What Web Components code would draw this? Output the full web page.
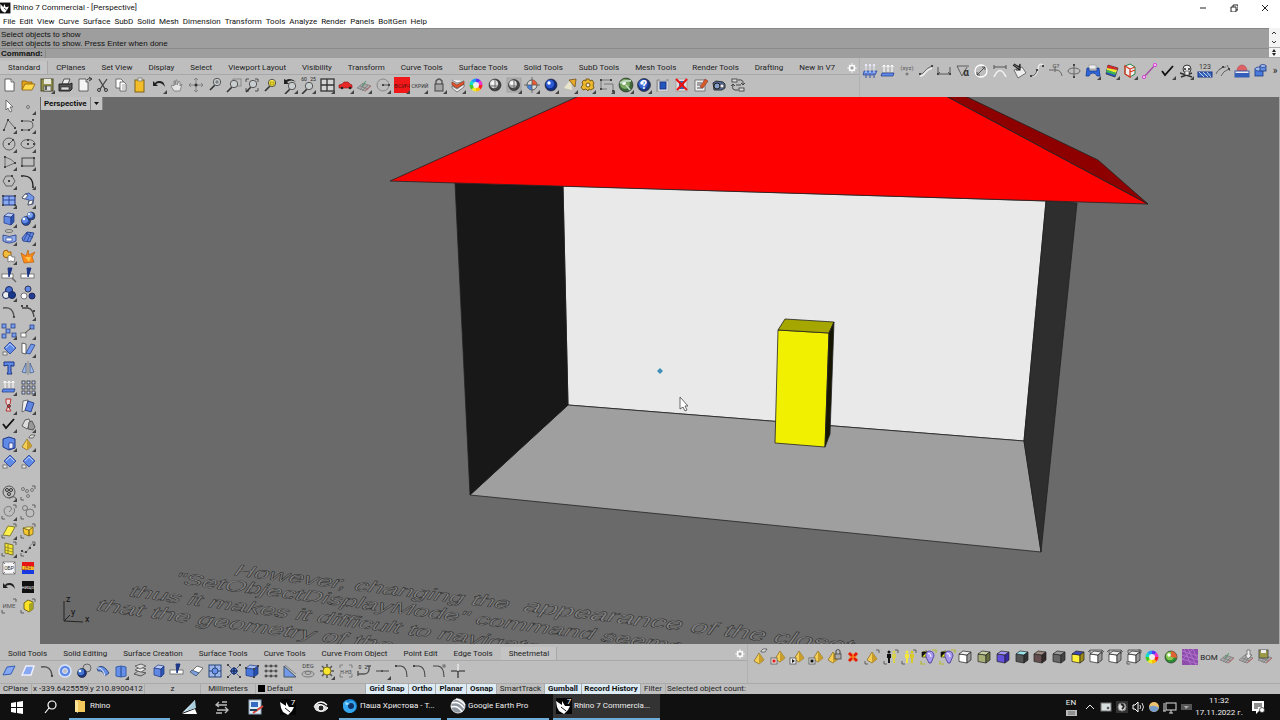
<!DOCTYPE html>
<html lang="en">
<head>
<meta charset="utf-8">
<title>Rhino 7 Commercial - [Perspective]</title>
<style>
    html, body { margin: 0; height: 100%; }
    body {
        display: flex;
        flex-direction: column;
        overflow: hidden;
        background: #bebebe;
        color: #222;
        font: 8px/10px Roboto, "Noto Sans", sans-serif;
    }
    .workspace { display: flex; flex: 1; min-height: 0; }
    .row { display: flex; }
    .sidebar { width: 40px; flex: none; background: #bebebe; }
</style>
</head>
<body>
    <title-bar>Rhino 7 Commercial - [Perspective]</title-bar>
    <menu-bar items="File,Edit,View,Curve,Surface,SubD,Solid,Mesh,Dimension,Transform,Tools,Analyze,Render,Panels,BoltGen,Help"></menu-bar>
    <command-area>
        <div>Select objects to show</div>
        <div>Select objects to show. Press Enter when done</div>
    </command-area>

    <div class="row">
        <tool-panel class="top" tabs="Standard,CPlanes,Set View,Display,Select,Viewport Layout,Visibility,Transform,Curve Tools,Surface Tools,Solid Tools,SubD Tools,Mesh Tools,Render Tools,Drafting,New in V7" active="Standard">
            <tool-strip columns="46" icons="new open save* print properties cut copy paste undo* hand rotate-view zoom zoom-window zoom-extents zoom-selected undo-view* zoom-lens* four-view* car* mesh-plane* circle-axis* all-red* hide-text* lock* layers* wheel sphere sphere-framed* target* sphere-blue* spotlight* gear* dimension* globe* help* panel-blue cancel edit camera swap"></tool-strip>
        </tool-panel>
        <tool-strip class="side-top" columns="22" more icons="arrows-plane arrows-base xyz offset-curve span angle diameter arc-dim box-arrow blend radius-tick spin clamp* rainbow* open-box* line-magenta check* skull* hatch-123 fillet-curve dome cylinders"></tool-strip>
    </div>

    <div class="workspace">
        <div class="sidebar">
            <tool-strip columns="2" rows="20" icons="pointer point* polyline* curve* circle* ellipse* arc* rect* polygon* fillet* surface* loft* cube* spheres* tube* patch* puzzle* explode trim split join* balls arc-plain arc-points* array* move* diamond-copy shear* text-solid mirror arrows-base* grid-nine* bolt* flip* check* solid-gray* cube-cut* pyramid-tag* diamond-copy diamond-copy"></tool-strip>
            <tool-strip class="lower" columns="2" rows="7" icons="film* nodes spiral* circles yellow-plane* yellow-box yellow-grid* nodes-curve text-obr text-color undo text-none text-name yellow-cube"></tool-strip>
        </div>
        <model-viewport label="Perspective"></model-viewport>
    </div>

    <div class="row">
        <tool-panel class="bottom" tabs="Solid Tools,Solid Editing,Surface Creation,Surface Tools,Curve Tools,Curve From Object,Point Edit,Edge Tools,Sheetmetal" active="Sheetmetal">
            <tool-strip columns="40" icons="patch-blue patch-white arc-plain ring cylinder-ball bend fold* stack cube split slab frame-blue explode-blue cube-dots dots slope deg flower* bracket-text unroll line-dot* arc-top arc-top arc-square cross-line"></tool-strip>
        </tool-panel>
        <tool-strip class="side-bottom" columns="28" icons="pyramid-tag pyramid-red pyramid-arrow pyramid-black pyramid-lock red-x pyramid-frame people-dark people-yellow bulb bulb cube-white cube-olive cube-violet cube-cyan cube-brown cube-gray cube-yellow cube-wire cube-wire cube-wire-corners wheel globe-color mesh-purple bom mesh-plane mesh-down mesh-save"></tool-strip>
    </div>

    <status-bar></status-bar>
    <task-bar></task-bar>

<script>
// region Icon drawing helpers
const p = (d, fill = 'none', stroke = '#333', w = 1) =>
    `<path d="${d}" fill="${fill}" stroke="${stroke}" stroke-width="${w}"/>`
const c = (x, y, r, fill = 'none', stroke = '#333', w = 1) =>
    `<circle cx="${x}" cy="${y}" r="${r}" fill="${fill}" stroke="${stroke}" stroke-width="${w}"/>`
const e = (x, y, rx, ry, fill = 'none', stroke = '#333', w = 1) =>
    `<ellipse cx="${x}" cy="${y}" rx="${rx}" ry="${ry}" fill="${fill}" stroke="${stroke}" stroke-width="${w}"/>`
const r = (x, y, w, h, fill = 'none', stroke = '#333', sw = 1) =>
    `<rect x="${x}" y="${y}" width="${w}" height="${h}" fill="${fill}" stroke="${stroke}" stroke-width="${sw}"/>`
const t = (x, y, size, str, fill = '#222', weight = 400) =>
    `<text x="${x}" y="${y}" font-size="${size}" fill="${fill}" font-weight="${weight}" text-anchor="middle">${str}</text>`

const BLUE = '#5f8ae8'
const NAVY = '#1c3585'
const PALE = '#b9cdf8'

const cube = (front, top, side, line = '#222') =>
    p('M3 6 11 7V15L3 13.500Z', front, line, .7) + p('M3 6 7 3 15 4 11 7Z', top, line, .7) + p('M11 7 15 4V12L11 15Z', side, line, .7)
const pyramid = (x, y) =>
    p(`M${x} ${y}l5 7-5 4-5-3z`, '#f4ce55', '#6b5310', .6) + p(`M${x} ${y}l5 7-5 4z`, '#c99d2c', 'none')
const lens = (x, y, fill = '#c9ced1') =>
    p(`M${x - 2} ${y + 3}l-5 5`, 'none', '#333', 1.600) + c(x, y, 3.700, fill, '#555')
const nodes = (...pts) => pts.map(([x, y]) => r(x - 1, y - 1, 2, 2, '#444', 'none')).join('')
const corners = p('M2 13V16H5M13 2H16V5', 'none', '#555', .9)
const arrow = p('M3 5V10H8L6 8Q11 5 15 11 14 4 9 5 6 5 5 7Z', '#222', 'none')
const diamond = (x, y) => p(`M${x} ${y - 6}l6 6-6 6-6-6z`, BLUE, NAVY, .7) + p(`M${x - 4} ${y}l4-4 4 4`, 'none', PALE)
const mesh = p('M2 12 8 7 16 10 10 15ZM5 10 13 13M10 8 5 14M13 9 7 15', '#aaa', '#777', .7) + p('M10 15 16 10', 'none', '#b66')

function wheel(x, y, rad) {
    const colors = ['#f22', '#fb0', '#ee2', '#4c2', '#1dc', '#29f', '#53f', '#e3c']
    return colors.map((color, i) => {
        const a = i * Math.PI / 4
        const b = a + Math.PI / 4
        const px = v => (x + rad * Math.cos(v)).toFixed(1)
        const py = v => (y + rad * Math.sin(v)).toFixed(1)
        return p(`M${x} ${y}L${px(a)} ${py(a)}A${rad} ${rad} 0 0 1 ${px(b)} ${py(b)}Z`, color, 'none')
    }).join('')
}
const ball = (x, y, rad, color, dark) =>
    c(x, y, rad, dark, '#222', .6) + c(x - 1, y - 1, rad * .7, color, 'none') + c(x - 2, y - 2, rad * .28, '#fff', 'none')
const xmark = p('M3 3 14 14M14 3 4 14', 'none', '#e11', 2)
const upArrows = x => p(`M${x} 10V3M${x - 1.500} 5l1.500-2 1.500 2`, 'none', '#fff', 1)
const bulb = p('M3 4V9H8V3Z', '#ee2', '#111', .6) + p('M3 4H8L3 9Z', '#111', 'none') + p('M10 3Q15 3 15 8L12 15H10L7 9Q6 4 10 3Z', '#a69af0', '#44338c', .8) + p('M9 6Q11 4 12 9', 'none', '#fff') + p('M2 13V16H6M13 2H17V5', 'none', '#b3b830', 1.200)
const person = (x, fill) => c(x, 4, 1.500, fill, 'none') + p(`M${x - 2} 6H${x + 2}V10H${x + 1}V15H${x - 1}V10H${x - 2}Z`, fill, 'none')
// endregion

const ICONS = {
    'new': p('M5 3H11L14 6V15H5Z', '#fff', '#444', .8) + p('M11 3V6H14', '#ddd', '#444', .7),
    'open': p('M3 14V5H7L8 6H13V9', '#e5a51a', '#8a5e0b', .8) + p('M3 14 6 8H16L13 14Z', '#ffd84c', '#8a5e0b', .8),
    'save': r(3, 3, 12, 12, '#92904d', '#4c4c28') + r(6, 3, 7, 5, '#e8e8df', 'none') + r(6, 10, 7, 5, '#ddd', '#444', .6) + p('M8 10V14', 'none', '#333', 1.500),
    'print': p('M6 8 8 3H14L12 8Z', '#eee', '#333', .8) + p('M3 8H14L16 7V13L14 15H3Z', '#555', '#222') + r(5, 11, 8, 3, '#ddd', '#222', .6),
    'properties': p('M4 3H11V6H13V15H4Z', '#f5f5f5', '#444', .8) + p('M12 4Q13 2 16 3M14 1 17 3 14 5', 'none', '#333', 1),
    'cut': p('M5 3 11 13M13 3 6 13', 'none', '#444', 1.300) + c(5, 14, 1.500) + c(12, 14, 1.500),
    'copy': p('M4 3H9L11 5V12H4Z', '#fff', '#555', .8) + p('M8 6H12L14 8V15H8Z', '#fff', '#555', .8) + p('M10 9H13M10 11H13M10 13H13', 'none', '#777', .7),
    'paste': r(4, 4, 9, 12, '#f2bd27', '#80631b') + r(7, 2, 4, 3, '#e5e5e5', '#777', .7),
    'undo': arrow,
    'hand': p('M6 15 3 10 4 9 6 10V5H7V9L8 4H9V9L11 5 12 6V10L14 8 12 15Z', '#e5e5e5', '#777', .8),
    'rotate-view': p('M9 2V16M2 9H16M7 4 9 2 11 4M7 14 9 16 11 14M4 7 2 9 4 11M14 7 16 9 14 11', 'none', '#777', .8) + c(9, 9, 1.500, '#333', 'none'),
    'zoom': lens(11, 6) + p('M9 6H13M11 4V8', 'none', '#555', .8),
    'zoom-window': r(8, 3, 8, 7, 'none', '#777', .7) + lens(9, 8),
    'zoom-extents': lens(10, 8) + p('M3 6V3H6M12 3H15V6M15 12V15H12M3 12V15H6', 'none', '#333', .8),
    'zoom-selected': lens(10, 7, '#fff04a') + p('M8 6H12V9H8Z', '#e9d52e', '#77670b', .5),
    'undo-view': lens(11, 10) + p('M3 3V8H8L6 6Q10 3 15 6 10 1 5 4Z', '#222', 'none'),
    'zoom-lens': t(5, 5, 5, '60') + t(14, 5, 5, '25') + lens(10, 10),
    'four-view': r(3, 3, 13, 12, '#d4d4d4', '#333', 1.300) + p('M9 3V15M3 9H16', 'none', '#333', 1.300),
    'car': p('M2 9 5 8 7 6H11L13 8 15 9V12H2Z', '#e62828', '#8f1111', .6) + c(5, 12, 1.300, '#222', 'none') + c(13, 12, 1.300, '#222', 'none'),
    'mesh-plane': mesh + p('M7 10 11 5', 'none', '#496'),
    'circle-axis': c(9, 9, 6, 'none', '#888') + p('M9 9H15', 'none', '#555') + nodes([9, 9], [15, 9]),
    'all-red': r(1, 1, 16, 16, '#f01818', 'none') + t(9, 12, 6, 'ВСИЧ', '#5d1111'),
    'hide-text': t(9, 12, 5, 'СКРИЙ', '#333'),
    'lock': p('M6 9V5Q9 1 12 5V9', 'none', '#555', 1.400) + r(5, 8, 8, 7, '#a5a5a5', '#444'),
    'layers': p('M3 10 8 13 15 8V11L8 16 3 12Z', '#eee', '#444', .6) + p('M3 6 8 9 15 5V8L8 12 3 9Z', '#e4542d', '#7c2c16', .6) + p('M3 4 8 7 15 5', '#fff', '#666', .7),
    'wheel': wheel(9, 9, 6.500) + c(9, 9, 3, '#eee', 'none'),
    'sphere': ball(9, 9, 6, '#ddd', '#444') + p('M9 3V15M4 10H14', 'none', '#555', .8),
    'sphere-framed': r(2, 2, 14, 14, '#afafaf', '#999', .7) + ball(9, 9, 5.500, '#ddd', '#444') + p('M9 4V14M4 10H14', 'none', '#555', .8),
    'target': c(9, 9, 5, '#ddd', '#555') + p('M9 9V4A5 5 0 0 1 14 9Z', '#e75b35', 'none') + p('M9 9V14A5 5 0 0 1 4 9Z', '#457fd8', 'none') + p('M9 1V17M1 9H17', 'none', '#555', .8),
    'sphere-blue': ball(9, 9, 6, '#2d5bd6', '#102d80'),
    'spotlight': p('M10 3 3 12 11 14Z', '#e9e5cd', 'none') + p('M8 4 15 3 14 11Z', '#e7ac29', '#75501a', .8),
    'gear': p('M7 3H10L11 5 13 4 15 7 14 9 15 12 12 14 10 13 9 15 7 13 4 14 2 11 4 9 3 6 5 4 7 5Z', '#edb82b', '#725212', .9) + c(9, 9, 2, '#eed', '#725212'),
    'dimension': p('M3 4H13M3 4V13M6 8H15V15M3 13H9', 'none', '#666', .8) + nodes([3, 4], [13, 4], [3, 13], [15, 15]),
    'globe': ball(9, 9, 7, '#7ca862', '#3d6636') + p('M3 7Q8 4 14 5M9 9 13 14', 'none', '#bed9bd', 1.800),
    'help': ball(9, 9, 6.500, '#3863d2', '#193682') + t(9, 13, 12, '?', '#fff', 700),
    'panel-blue': r(4, 5, 10, 10, '#eee', '#aaa', .7) + r(6, 6, 6, 7, '#2455bd', NAVY) + p('M3 4V16M3 4H6M12 4H15', 'none', '#888'),
    'cancel': r(3, 3, 11, 12, '#ddd', '#999', .7) + r(6, 5, 5, 8, '#3d63aa', 'none') + xmark,
    'edit': p('M3 4H13V15H3Z', '#eee', '#555', .7) + p('M5 7H10M5 9H9M5 12H11', 'none', '#555') + p('M8 11 13 3 16 5 11 12Z', '#d75c23', '#833', .6),
    'camera': p('M3 7 6 5 13 6 15 8V12L12 14H4Z', '#536ca3', '#333') + c(7, 10, 3, '#879fc7', '#222') + c(12, 10, 2, '#eee', '#333', .7),
    'swap': r(3, 3, 5, 3, '#ddd', '#333', .8) + r(10, 12, 5, 3, '#ddd', '#333', .8) + p('M9 4Q15 3 14 8M9 14Q2 15 4 9M12 7 14 9 16 7M2 10 4 8 6 10M7 9H12', 'none', '#444', 1),

    'arrows-plane': p('M3 9H16L14 13H2Z', BLUE, NAVY, .6) + [5, 9, 13].map(x => p(`M${x} 2V16M${x - 1} 4l1-2 1 2`, 'none', '#eef', .9)).join('') + p('M5 11V16M9 11V16M13 11V16', 'none', NAVY),
    'arrows-base': p('M3 11H15L14 14H2Z', BLUE, NAVY, .7) + upArrows(5) + upArrows(9) + upArrows(13),
    'xyz': t(9, 8, 6, '(xyz)', '#555') + c(9, 12, 1, 'none', '#666'),
    'offset-curve': p('M3 14Q6 14 8 11T15 6', 'none', '#eee', 1.500) + p('M3 12Q6 12 8 9T15 4', 'none', '#555', .8) + nodes([3, 12], [15, 4]),
    'span': p('M3 5V12H15V5M3 12 5 10M15 12 13 10', 'none', '#555', 1) + nodes([3, 12], [15, 12]),
    'angle': p('M3 4H15M3 4 8 14 13 5', 'none', '#555', .9) + t(12, 14, 10, 'α', '#333', 700),
    'diameter': c(9, 9, 6, 'none', '#fff', 1.300) + p('M5 13 13 5M10 5H13V8M5 10V13H8', 'none', '#444', .9),
    'arc-dim': p('M3 5H15M3 3V7M15 3V7', 'none', '#555') + p('M3 15Q9 2 15 15', 'none', '#eee', 1.600),
    'box-arrow': p('M4 8 12 5 16 11 8 16Z', '#eee', '#555', .8) + p('M3 3 10 8M4 2 9 5 10 2V8H6', 'none', '#222', 1.200),
    'blend': p('M3 14Q9 15 10 7T16 4', 'none', '#eee', 1.300) + p('M3 14Q8 14 9 8', 'none', '#555') + nodes([3, 14], [9, 8], [15, 4]),
    'radius-tick': t(9, 6, 6, 'G?', '#444') + p('M2 8H9Q14 8 15 14M8 6V10', 'none', '#666'),
    'spin': e(9, 9, 6, 3, 'none', '#666') + p('M9 3V15', 'none', '#666') + nodes([9, 3], [9, 15]),
    'clamp': p('M5 3H12V7H5Z', '#eee', '#999', .7) + p('M3 6H5V9H13V6H15L16 14H13Q12 11 9 11T5 14H2Z', '#2e65dc', '#193c91', .8),
    'rainbow': p('M5 3 15 6 12 15 3 12Z', '#284fc9', '#333', .7) + p('M5 3 15 6 14 8 4 6Z', '#d72a24', 'none') + p('M4 6 14 8 13 11 4 8Z', '#efe82d', 'none') + p('M4 8 13 11 12 13 3 10Z', '#38b84e', 'none'),
    'open-box': p('M4 4 9 2 14 5V12L9 15 4 12Z', '#eee', '#278347') + p('M4 4 9 7V15L4 12ZM9 7 14 5M9 10 14 8', 'none', '#dd3722', 1.300),
    'line-magenta': p('M4 15 15 3', 'none', '#a64aa6', 1.300) + c(4, 15, 1.700, '#f6b6f6', '#d34bd3') + c(15, 3, 1.700, '#f6b6f6', '#d34bd3'),
    'check': p('M3 9 6 13 14 4', 'none', '#111', 1.800),
    'skull': p('M3 11 15 15M15 11 4 15', 'none', '#333', 1.500) + c(10, 7, 4, '#eee', '#333', 1) + r(8, 9, 4, 4, '#eee', '#333', .6) + c(8, 7, 1, '#222', 'none') + c(12, 7, 1, '#222', 'none'),
    'hatch-123': t(9, 7, 7, '123', '#333') + r(2, 10, 14, 5, '#3765bc', NAVY) + p('M3 10 8 15M7 10 12 15M11 10 15 15', 'none', '#e4edff', .8),
    'fillet-curve': p('M2 12Q5 5 12 5M7 14Q9 9 15 7M5 8 9 5M13 3 16 9', 'none', '#666', 1) + nodes([9, 5], [15, 7]),
    'dome': p('M4 9A5 6 0 0 1 14 9Z', '#df6065', '#a44', .6) + r(2, 9, 14, 6, '#eee', '#3b5ca7') + r(2, 11, 14, 4, '#315fbb', 'none'),
    'cylinders': r(3, 7, 8, 7, '#477ad9', NAVY, .8) + e(7, 7, 4, 2, '#9ebbee', NAVY, .7) + r(8, 4, 6, 5, '#638ede', NAVY, .8) + e(11, 4, 3, 1.500, '#9ebbee', NAVY, .7),

    'pointer': p('M6 3V13L8 11 10 15 12 14 10 10H13Z', '#fff', '#555', .8),
    'point': c(9, 10, 1.500, 'none', '#666', .8),
    'polyline': p('M4 14 8 4 15 12', 'none', '#555', .9) + nodes([4, 14], [8, 4], [15, 12]),
    'curve': p('M3 5H10Q14 5 14 9T9 14H3', 'none', '#555', .9) + nodes([3, 5], [14, 4], [3, 14], [10, 14]),
    'circle': c(9, 9, 6, 'none', '#555', .9) + p('M9 9 13 5', 'none', '#555') + nodes([9, 9], [13, 5]),
    'ellipse': e(9, 9, 7, 4.500, 'none', '#555', .9) + nodes([9, 9], [9, 5], [15, 9]),
    'arc': p('M5 4Q12 6 15 10L5 14V4', 'none', '#555', .8) + nodes([5, 4], [15, 10], [5, 14]),
    'rect': r(3, 5, 12, 8, 'none', '#444', 1) + nodes([3, 13], [15, 5]),
    'polygon': p('M6 4H12L15 9 12 14H6L3 9Z', 'none', '#555', .9) + nodes([9, 9], [12, 4]),
    'fillet': p('M3 4Q14 3 14 15', 'none', '#222', 1.300) + nodes([3, 4], [14, 15]),
    'surface': r(3, 5, 12, 9, '#89a9f1', NAVY, 1) + p('M9 5V14M3 9H15', 'none', NAVY, .8) + nodes([3, 5], [15, 5], [3, 14], [15, 14]),
    'loft': p('M3 7 6 3 10 2 15 6 14 13 9 14 10 9Z', '#7298e7', NAVY, .7) + p('M3 7 6 3 9 4 6 8Z', '#fff', '#444', .7) + p('M10 10 14 9 13 13 9 14Z', '#fff', '#444', .7),
    'cube': p('M4 6 11 7V15L4 13Z', '#6189e4', NAVY, .7) + p('M4 6 8 3 14 4 11 7Z', '#bccdf7', NAVY, .7) + p('M11 7 14 4V12L11 15Z', '#3157b6', NAVY, .7),
    'spheres': ball(7, 11, 4.500, BLUE, '#284ca8') + ball(12, 6, 4, '#7da4f1', '#284ca8'),
    'tube': e(9, 3, 4, 1.500, 'none', '#777') + p('M3 7Q9 10 16 7V13Q9 17 3 13Z', '#8facef', NAVY, .8) + r(6, 10, 6, 3, '#fff', NAVY, .6),
    'patch': p('M3 10 8 4 15 5 11 14 4 13Z', '#6389e3', NAVY, .8) + p('M7 5 14 10M9 4 5 12M12 4 8 14', 'none', NAVY, .7),
    'puzzle': p('M4 4 7 3 8 5 11 5 11 9 8 11 4 10 3 7Z', '#f2bd3b', '#a15c10') + p('M8 9 11 8 12 10 15 10 14 15 11 14 8 15Z', '#fff', '#666', .7),
    'explode': p('M2 6 7 9 9 3 10 8 16 5 13 10 15 15 5 16Z', '#ff8a19', '#b8630b', .7) + p('M6 10 12 10 10 15Z', '#ffc546', 'none'),
    'trim': r(2, 8, 11, 4, '#fff', '#555', .7) + p('M8 2H12L9 11Z', NAVY, NAVY) + p('M12 12 16 16', 'none', '#666', 1.500),
    'split': r(2, 8, 13, 4, '#fff', '#555', .7) + p('M8 2H12L9 11Z', NAVY, NAVY),
    'join': c(9, 6, 3.500, '#486fd0', '#16275f') + c(6, 11, 3.500, '#eee', '#16275f') + c(12, 11, 3.500, '#173788', '#16275f'),
    'balls': c(9, 5, 3, BLUE, '#335') + c(5, 12, 3, '#fff', '#445', .7) + c(13, 12, 3, '#1e3e94', '#225'),
    'arc-plain': p('M3 5Q13 3 14 14', 'none', '#555', 1.500) + c(14, 14, .7),
    'arc-points': p('M3 5H9Q14 6 15 14', 'none', '#444', 1.300) + nodes([3, 3], [8, 3], [15, 8]),
    'array': [[4, 4], [13, 4], [8, 9], [4, 14], [14, 13]].map(([x, y]) => r(x - 2, y - 2, 4, 4, '#7b9ee8', NAVY, .7)).join(''),
    'move': r(2, 11, 5, 4, '#fff', '#555', .7) + r(11, 3, 4, 4, '#7096e7', NAVY, .7) + p('M6 11 12 6', 'none', '#444'),
    'diamond-copy': diamond(10, 8) + r(3, 12, 4, 3, '#eee', '#555', .7),
    'shear': p('M3 3 7 4V14L3 13Z', '#fff', '#444', .8) + p('M7 13 12 4 16 5 11 14Z', '#759bed', NAVY, .7),
    'text-solid': p('M4 3H14V7H12L11 6V13L12 15H7L8 13V6L4 7Z', BLUE, NAVY),
    'mirror': p('M3 13 7 4V14ZM15 13 11 4V14Z', '#a3bced', '#486087', .8) + p('M9 2V16', 'none', '#777', .7),
    'grid-nine': [3, 8, 13].map(x => [3, 8, 13].map(y => r(x, y, 3, 3, '#c9d7ff', '#333', .8)).join('')).join(''),
    'bolt': p('M6 2H11L10 7 8 9 11 14H6L8 9 6 6Z', '#e9dada', '#b33') + c(9, 9, 1.500, '#c33', '#333', .7),
    'flip': p('M4 4 9 3 7 13 3 15Z', '#eee', '#444', .7) + p('M9 4 15 6 12 15 6 13Z', '#6086df', NAVY, .8),
    'solid-gray': p('M3 11 6 5 10 4 12 8 8 14Z', '#ddd', '#444', .8) + p('M10 7 13 6 16 12 14 15 9 14Z', '#999', '#444', .8),
    'cube-cut': p('M3 5 9 3 15 5V14L9 16 3 13Z', BLUE, NAVY) + p('M9 9H13V14L9 15Z', '#eef', NAVY, .7),
    'pyramid-tag': pyramid(8, 5) + p('M10 3 12 1H16L14 4H10Z', '#ddd', '#444', .7),
    'film': c(9, 8, 6, 'none', '#555') + c(7, 6, 1.500) + c(11, 6, 1.500) + c(9, 10, 1.500) + p('M9 14Q15 11 16 15', 'none', '#555'),
    'nodes': [[4, 5], [8, 7], [13, 6], [9, 12]].map(([x, y]) => c(x, y, 1.500, 'none', '#666', .8)).join('') + corners,
    'spiral': p('M9 9Q13 7 11 4Q6 2 4 7Q4 14 11 13Q16 9 14 5', 'none', '#777', .9) + corners,
    'circles': c(6, 5, 2.500, 'none', '#666', .8) + c(11, 10, 4, 'none', '#666', .8) + corners,
    'yellow-plane': p('M3 13 8 4 15 5 10 14Z', '#fff04a', '#6a6825', .8) + corners,
    'yellow-box': p('M4 6 10 8V14L5 12ZM10 8 14 5V12L10 14Z', '#f6c62c', '#71601a', .8) + p('M4 6 8 5 14 5 10 8Z', '#fff17d', '#71601a', .7) + corners,
    'yellow-grid': p('M5 3 13 5V15L5 13Z', '#f9e632', '#77762d') + p('M8 4V14M5 7 13 9M5 10 13 12', 'none', '#77762d', .7) + corners,
    'nodes-curve': p('M3 11Q7 15 10 8T16 5', 'none', '#777', .8) + nodes([3, 11], [7, 12], [11, 8], [15, 5]) + corners,
    'text-obr': r(3, 3, 12, 12, '#f7f7f7', '#444', .5) + t(9, 11, 5, 'ОБР') + p('M3 3 5 5M15 3 13 5M3 15 5 13M15 15 13 13', 'none', '#444', .7),
    'text-color': r(3, 3, 12, 4, '#e71515', 'none') + r(3, 7, 12, 4, '#ffe02d', 'none') + r(3, 11, 12, 4, '#173ae0', 'none') + t(9, 11, 5, 'ЦВЯТ', '#a12'),
    'text-none': r(3, 3, 12, 12, '#111', 'none') + t(9, 11, 4, 'НИЩО', '#fff'),
    'text-name': t(9, 11, 6, 'ИМЕ', '#555') + corners,
    'yellow-cube': p('M5 6 9 3 14 5V12L10 15 5 12Z', '#ffe126', '#6d631b') + p('M10 7V15L14 12V5Z', '#a5a51d', 'none') + corners,

    'patch-blue': p('M3 13 7 5 15 4 11 12Z', '#86a7f1', '#335eb7'),
    'patch-white': p('M3 13 7 4 15 4 12 13Z', '#86a7f1', '#eef', 1.500),
    'ring': c(9, 9, 6, BLUE, '#dbe5ff', 1.500) + c(9, 9, 2.500, '#bebebe', '#dbe5ff'),
    'cylinder-ball': c(12, 6, 4, 'none', '#666') + ball(7, 11, 4.500, '#4577d2', NAVY),
    'bend': p('M3 6Q9 1 15 11L11 14Q9 8 4 9Z', '#658ee6', '#34507f') + p('M3 6Q9 5 11 14', 'none', '#dfe8ff'),
    'fold': p('M4 5 9 4V15L4 14ZM9 4 14 5V14L9 15Z', '#668fea', '#375fa9'),
    'stack': p('M3 12 7 9 15 11 10 14Z', '#bbb', '#555') + p('M4 8 9 5 15 7 10 10Z', '#eee', '#666') + p('M4 4 10 2 15 4 9 7Z', '#ddd', '#666'),
    'slab': p('M5 9 10 4 16 6 12 11Z', '#fff', '#555', .8) + p('M3 10 5 8 12 11 9 14Z', '#7da0e2', '#456', .8),
    'frame-blue': r(3, 3, 12, 12, '#9eb6e8', '#27457b') + p('M9 3V15M3 9H15', 'none', '#27457b') + c(9, 9, 3, '#6c93ed', '#27457b'),
    'explode-blue': c(9, 9, 3, '#4a74d0', NAVY) + p('M9 5V13M5 9H13', 'none', '#124', 1) + p('M3 3 6 6M15 3 12 6M3 15 6 12M15 15 12 12', 'none', '#456', .8) + nodes([3, 3], [15, 3], [3, 15], [15, 15]),
    'cube-dots': cube('#4676d8', '#a5bdf1', '#2550aa', NAVY) + nodes([3, 6], [11, 7], [15, 4], [11, 15]),
    'dots': [4, 9, 14].map(y => p(`M4 ${y}H14`, 'none', '#555', .7) + c(4, y, 1) + c(9, y, 1) + c(14, y, 1)).join(''),
    'slope': p('M3 15V4L15 15Z', '#739aea', '#456') + p('M4 3 15 12', 'none', '#888'),
    'deg': t(9, 6, 6, 'DEG', '#444') + e(9, 12, 6, 3, 'none', '#777') + e(9, 11, 3, 1.500, 'none', '#777'),
    'flower': p('M9 2V16M2 9H16M4 4 14 14M14 4 4 14', 'none', '#555', 1.500) + c(9, 9, 4, '#f8e52e', '#827420'),
    'bracket-text': t(9, 12, 5, 'H-H3', '#444') + p('M3 6V3H6M12 3H15V6M3 12V15H6M12 15H15V12', 'none', '#666', .7),
    'unroll': p('M3 12H9Q15 12 14 4M3 9V14M12 4H16', 'none', '#555', 1.400) + t(5, 7, 5, '0') + t(11, 7, 5, '2'),
    'line-dot': p('M2 9H15', 'none', '#444') + c(8, 9, 1, '#444', 'none'),
    'arc-top': p('M3 4H8Q14 5 14 15', 'none', '#444', 1.100) + nodes([3, 4]),
    'arc-square': p('M3 4H8Q14 5 14 15', 'none', '#444', 1.100) + r(13, 3, 2, 2, 'none', '#555', .8),
    'cross-line': p('M2 9H16M9 9V16', 'none', '#222', 1.100) + p('M9 2V9', 'none', '#eee', 1.300),
    'pyramid-red': pyramid(11, 3) + r(2, 10, 6, 6, '#eee', '#555', .8) + r(4, 12, 2, 2, '#e21f1f', '#e21f1f'),
    'pyramid-arrow': pyramid(11, 3) + r(2, 10, 6, 6, '#eee', '#555', .8) + p('M4 11 7 13 4 15Z', '#222', 'none'),
    'pyramid-black': pyramid(11, 3) + r(2, 10, 6, 6, '#eee', '#555', .8) + r(4, 12, 2, 2, '#111', '#111'),
    'pyramid-lock': pyramid(7, 4) + p('M10 6V3Q12 0 14 3V6', 'none', '#555', 1.200) + r(9, 6, 6, 5, '#aaa', '#444', .8),
    'red-x': p('M5 5 13 13M13 5 5 13', 'none', '#e51b08', 3) + p('M5 9H13M9 5V13', 'none', '#ff9b25', 1),
    'pyramid-frame': pyramid(9, 4) + corners,
    'people-dark': person(7, '#111') + person(12, '#d8d34f') + corners,
    'people-yellow': person(7, '#f4e83c') + person(12, '#d8c828') + corners,
    'bulb': bulb,
    'cube-white': cube('#fff', '#eee', '#999'),
    'cube-olive': cube('#a8b078', '#c9cda4', '#68713d'),
    'cube-violet': cube('#6351dc', '#a297f6', '#3929a7'),
    'cube-cyan': cube('#555', '#9de6ef', '#333'),
    'cube-brown': cube('#644e4e', '#a08b83', '#332929'),
    'cube-gray': cube('#666', '#999', '#444'),
    'cube-yellow': cube('#fff13b', '#4048be', '#9b8b18'),
    'cube-wire': cube('#fff', '#eee', '#999') + p('M3 5V2H15V6M3 2 1 4M15 2 17 4', 'none', '#444', .8),
    'cube-wire-corners': cube('#fff', '#eee', '#999') + p('M3 5V2H15V6', 'none', '#444', .8) + corners,
    'globe-color': ball(9, 9, 6, '#88c94d', '#2b8c35') + p('M9 3Q15 4 15 10L9 9Z', '#e16232', 'none'),
    'mesh-purple': r(1, 1, 16, 16, '#8e4cad', 'none') + p('M1 3 17 8M1 7 17 12M1 11 17 16M3 1 10 17M7 1 15 17M12 1 17 12M1 12 12 1', 'none', '#b57ad0', .8),
    'bom': t(9, 12, 8, 'BOM'),
    'mesh-down': mesh + p('M10 2H13V7H15L11 11 8 7H10Z', '#eee', '#666', .8),
    'mesh-save': mesh + r(3, 2, 9, 8, '#9b9945', '#555') + r(5, 2, 5, 3, '#eee', 'none'),

    'rhino': r(2, 2, 14, 14, '#111', 'none') + p('M3 4 7 8 8 4 10 8 14 7 12 11 9 15 5 13 3 9Z', '#fff', 'none') + p('M8 9 11 12', 'none', '#111'),
    'rhino-seven': r(1, 1, 16, 16, '#050505', 'none') + p('M1 4 7 8 7 4 10 9 15 9 13 13 9 17 4 14 2 10Z', '#fff', 'none') + p('M6 10 11 14', 'none', '#111') + t(14, 7, 8, '7', '#fff'),
    'windows': p('M3 5 8 4V9H3ZM9 4 15 3V9H9ZM3 10H8V15L3 14ZM9 10H15V16L9 15Z', '#fff', 'none'),
    'search': c(11, 7, 4, 'none', '#fff', 1.200) + p('M8 10 4 15', 'none', '#fff', 1.200),
    'folder': p('M4 3H9L10 4H14V15H4Z', '#f2c75c', 'none') + p('M4 3 7 5V16L4 14Z', '#ffe59a', 'none'),
    'blade': p('M2 15 15 2V10Z', '#d5eef7', 'none') + p('M2 16 15 11 17 16Z', '#fff', 'none') + p('M6 13 15 2 16 10Z', '#a9cede', 'none'),
    'arrows-task': p('M3 7H14M6 4 3 7 6 9M4 12H15M12 9 15 12 12 15M9 4H14M3 15H9', 'none', '#bbb', 1.300),
    'paint-task': r(3, 2, 12, 14, '#dfedf8', '#8da4bc') + r(5, 4, 7, 5, '#356bc3', 'none') + p('M7 15 17 8', 'none', '#d84538', 2) + p('M4 12H11', 'none', '#245', 2),
    'eye': p('M2 8Q9 4 16 10Q11 16 4 12Z', '#ddd', '#eee') + c(9, 10, 3, '#222', '#fff') + p('M3 7Q9 1 15 7', 'none', '#fff', 1.200),
    'firefox': c(9, 9, 7, '#187ed0', 'none') + p('M2 6 5 3 7 5Q11 2 14 6 17 13 10 16 3 16 2 10Z', '#36a7ef', 'none') + c(10, 9, 3, '#102f64', 'none') + p('M4 5 9 7 5 8Z', '#a4e3ff', 'none'),
    'earth': c(9, 9, 7, '#8e969f', '#ddd') + p('M3 6Q10 4 15 11M2 10Q9 8 13 15M7 2Q12 3 16 8', 'none', '#fff', 1.500),
    'chevron': p('M5 11 9 7 13 11', 'none', '#eee'),
    'tray-cam': r(4, 5, 10, 8, '#d8dddd', '#777') + c(11, 10, 2, '#54615f', '#eee'),
    'tray-swirl': r(3, 3, 12, 12, '#333', 'none') + c(9, 9, 4, '#ddd', '#888') + p('M8 6Q13 8 9 11', 'none', '#222', 2),
    'speaker': p('M4 7H6L9 4V14L6 11H4Z', 'none', '#fff') + p('M11 7Q12 9 11 11M13 5Q16 9 13 13', 'none', '#ddd'),
    'weather': c(9, 9, 5, '#efc06d', 'none') + p('M4 9Q9 6 14 10 12 14 9 14 5 14 4 9', '#779bc9', 'none'),
    'network': r(5, 5, 10, 7, '#111', '#ddd') + p('M8 15H12M10 12V15M3 5V13M2 13H5', 'none', '#ddd'),
    'tray-chip': r(4, 6, 11, 6, '#555', 'none') + p('M7 8H12L9 11Z', '#aaa', 'none'),
    'notice': p('M3 3H15V13H10L7 16V13H3Z', '#fff', 'none') + p('M5 6H13M5 8H13M5 10H9', 'none', '#222') + c(13, 12, 2.500, '#fff', '#222', .7),
    'gear-small': c(9, 9, 3.500, '#ddd', '#fff', 1.500) + c(9, 9, 1.200, '#aaa', '#888', .8) + p('M9 3V5M9 13V15M3 9H5M13 9H15M5 5 6 6M12 12 13 13M13 5 12 6M6 12 5 13', 'none', '#fff', 1.300),
}

const iconSvg = (name, flyout) =>
    `<svg width="18" height="18" viewBox="0 0 18 18" aria-hidden="true">${ICONS[name] || ''}${flyout ? '<path d="M17 14V18H13Z" fill="#444"/>' : ''}</svg>`

const BUTTON_RESET = `
    * { box-sizing: border-box; }
    button {
        margin: 0;
        padding: 0;
        border: 0;
        background: none;
        color: inherit;
        font: inherit;
        white-space: nowrap;
    }
    svg { display: block; flex: none; }
`

class BaseElement extends HTMLElement {
    connectedCallback() {
        if (this.shadowRoot) return
        this.attachShadow({ mode: 'open' })
        const template = document.createElement('template')
        template.innerHTML = `<style>${BUTTON_RESET}</style>${this.render()}`
        this.shadowRoot.appendChild(template.content.cloneNode(true))
    }

    list(name) {
        return (this.getAttribute(name) || '').split(',')
    }
}

class TitleBar extends BaseElement {
    render() {
        return `
            <style>
                :host { display: flex; align-items: center; height: 15px; background: #fff; color: #111; }
                .logo { width: 13px; overflow: hidden; }
                .logo svg { width: 14px; height: 14px; margin-left: -2px; }
                nav { display: flex; margin-left: auto; }
                nav button { width: 31px; height: 15px; display: grid; place-items: center; }
            </style>
            <span class="logo">${iconSvg('rhino')}</span>
            <slot></slot>
            <nav>
                <button aria-label="Minimize"><svg width="8" height="8">${p('M1 4H7', 'none', '#222')}</svg></button>
                <button aria-label="Restore"><svg width="8" height="8">${p('M1 3H6V8H1ZM3 3V1H8V6H6', 'none', '#222')}</svg></button>
                <button aria-label="Close"><svg width="8" height="8">${p('M1 1 7 7M7 1 1 7', 'none', '#222')}</svg></button>
            </nav>
        `
    }
}

class MenuBar extends BaseElement {
    render() {
        return `
            <style>
                :host { display: flex; gap: 4px; height: 13px; padding: 0 3px; background: #fff; color: #111; }
            </style>
            ${this.list('items').map(item => `<button>${item}</button>`).join('')}
        `
    }
}

class CommandArea extends BaseElement {
    render() {
        return `
            <style>
                :host { display: grid; grid-template-columns: 1fr 11px; background: #9e9e9e; color: #111; font-family: "Liberation Sans", Arial, sans-serif; }
                .history { height: 20px; padding: 1px 1px 0; line-height: 9px; border-top: 1px solid #888; }
                .prompt { display: flex; align-items: center; height: 10px; padding-left: 1px; border-top: 1px solid #8b8b8b; }
                label { font-weight: 700; }
                input { flex: 1; height: 8px; margin-left: 2px; padding: 0; border: 0; border-left: 1px solid #888; background: none; outline: 0; font: inherit; }
                .scroll { display: flex; flex-direction: column; background: #f3f3f3; border-bottom: 1px solid #aaa; }
                .scroll button { flex: 1; display: grid; place-items: center; }
            </style>
            <div class="history"><slot></slot></div>
            <div class="scroll">
                <button aria-label="Scroll up"><svg width="5" height="4">${p('M0 3 2 1 4 3')}</svg></button>
                <button aria-label="Scroll down"><svg width="5" height="4">${p('M0 1 2 3 4 1')}</svg></button>
            </div>
            <div class="prompt"><label for="command">Command:</label><input id="command" type="text"></div>
            <div class="scroll">
                <button aria-label="Previous"><svg width="5" height="3">${p('M0 3 2 0 4 3Z', '#222', 'none')}</svg></button>
                <button aria-label="Next"><svg width="5" height="3">${p('M0 0 2 3 4 0Z', '#222', 'none')}</svg></button>
            </div>
        `
    }
}

class ToolStrip extends BaseElement {
    render() {
        const columns = this.getAttribute('columns')
        const rows = this.getAttribute('rows')
        const icons = this.getAttribute('icons').split(' ')
        const buttons = icons.map(icon => {
            const name = icon.replace('*', '')
            return `<button aria-label="${name}">${iconSvg(name, icon.endsWith('*'))}</button>`
        })
        return `
            <style>
                :host { display: flex; box-sizing: border-box; min-width: 0; }
                :host(.side-top) { flex: 420; padding-top: 3px; }
                :host(.side-bottom) { flex: 529; padding: 3px 6px 0 2px; }
                :host([rows]) { height: 374px; width: 37px; }
                :host(.lower) { height: 131px; margin-top: 13px; }
                .grid {
                    display: grid;
                    flex: 1;
                    grid-template-columns: repeat(${columns}, minmax(0, 1fr));
                    grid-template-rows: ${rows ? `repeat(${rows}, minmax(0, 1fr))` : '19px'};
                }
                .grid button { display: flex; align-items: center; justify-content: center; min-height: 0; min-width: 0; }
                .more { width: 10px; height: 19px; font-size: 10px; }
            </style>
            <div class="grid">${buttons.join('')}</div>
            ${this.hasAttribute('more') ? '<button class="more" aria-label="More tools">»</button>' : ''}
        `
    }
}

class ToolPanel extends BaseElement {
    render() {
        const active = this.getAttribute('active')
        const tabs = this.list('tabs').map(tab =>
            `<button role="tab" aria-selected="${tab === active}">${tab}</button>`)
        return `
            <style>
                :host { display: block; box-sizing: border-box; min-width: 0; height: 39px; padding-top: 3px; border-right: 1px solid #b0b0b0; }
                :host(.top) { flex: 860; }
                :host(.bottom) { flex: 755; }
                .tabs { display: flex; height: 14px; border-bottom: 1px solid #a8a8a8; }
                [role=tab] { padding: 0 7px 0 8px; border-right: 1px solid transparent; }
                [aria-selected=true] { height: 100%; border-color: #a8a8a8; background: #c4c4c4; }
                .options { margin-left: auto; display: flex; align-items: center; }
                .options svg { width: 14px; height: 14px; }
            </style>
            <div class="tabs" role="tablist">${tabs.join('')}<button class="options" aria-label="Toolbar options">${iconSvg('gear-small')}</button></div>
            <slot></slot>
        `
    }
}

class ModelViewport extends BaseElement {
    render() {
        // Lettering lies flat on the ground plane, so it follows the plane's axes.
        const ground = (x, y, slope, size, text) =>
            `<text transform="matrix(1 ${slope} -.4 .56 ${x} ${y})" font-size="${size}">${text}</text>`
        return `
            <style>
                :host { position: relative; display: block; flex: 1; min-width: 0; background: #6a6a6a; border-right: 1px solid #aaa; }
                .scene { width: 100%; height: 100%; }
                .label {
                    position: absolute;
                    top: 0;
                    left: 1px;
                    display: flex;
                    height: 13px;
                    background: #c3c3c3;
                    color: #111;
                    font-weight: 700;
                }
                .label button { padding: 0 3px; border-right: 1px solid #888; }
                .ground { font-family: "Liberation Sans", Arial, sans-serif; fill: #858585; stroke: #2a2a2a; stroke-width: .7; }
                .axes { font-size: 9px; fill: #111; }
            </style>
            <svg class="scene" viewBox="40 97 1239 547" preserveAspectRatio="xMidYMid slice">
                <g stroke="#222" stroke-width=".8" stroke-linejoin="round">
                    <path d="M563 186 1046 201 1024 441 568 405Z" fill="#e9e9e9"/>
                    <path d="M568 405 1024 441 1041 552 470 495Z" fill="#9f9f9f"/>
                    <path d="M455 183 563 186 568 405 470 495Z" fill="#181818"/>
                    <path d="M1046 201 1077 203 1041 552 1024 441Z" fill="#2e2e2e"/>
                    <path d="M778 330 829 333 825 447 775 443Z" fill="#f0f000"/>
                    <path d="M778 330 785 319 834 322 829 333Z" fill="#a6a600"/>
                    <path d="M829 333 834 322 830 434 825 447Z" fill="#161600"/>
                    <path d="M390 181 579 96H946L1148 204Z" fill="#f00"/>
                    <path d="M946 96H965L1098 160 1148 204Z" fill="#8e0000"/>
                </g>
                <g class="ground">
                    ${ground(232, 575, .124, 27, 'However, changing the')}
                    ${ground(521, 611, .124, 30, 'appearance of the closet')}
                    ${ground(172, 583, .135, 27, '"SetObjectDisplayMode" command seems')}
                    ${ground(127, 596, .138, 27, 'thus it makes it difficult to navigate')}
                    ${ground(94, 610, .138, 28, 'that the geometry of the')}
                </g>
                <path d="M64 601V621L83 622M64 621 70 615" fill="none" stroke="#222"/>
                <g class="axes"><text x="66" y="602">z</text><text x="71" y="615">y</text><text x="85" y="622">x</text></g>
                <path d="M660 368 663 371 660 374 657 371Z" fill="#3f8fb8"/>
                <path d="M680 397V409L683 407 685 411 687 410 685 406H688Z" fill="#fff" stroke="#444" stroke-width=".8"/>
            </svg>
            <div class="label"><button>${this.getAttribute('label')}</button><button aria-label="Viewport menu"><svg width="5" height="4">${p('M0 0H5L2.500 3Z', '#111', 'none')}</svg></button></div>
        `
    }
}

class StatusBar extends BaseElement {
    render() {
        return `
            <style>
                :host {
                    display: grid;
                    box-sizing: border-box;
                    grid-template-columns: 32px 57px 56px 56px 55px 110px 43px 27px 31px 30px 48px 37px 59px 25px 1fr;
                    height: 11px;
                    border-top: 1px solid #aaa;
                    line-height: 10px;
                    white-space: nowrap;
                }
                :host > * { overflow: hidden; border-right: 1px solid #aaa; text-align: center; }
                .left { text-align: left; padding-left: 1px; }
                .on { background: #dcebf4; font-weight: 700; color: #111; }
                .swatch { display: inline-block; width: 7px; height: 7px; margin: 0 2px 0 1px; background: #000; vertical-align: -1px; }
                .count { border: 0; }
            </style>
            <button>CPlane</button>
            <span class="left">x -339.6425559</span>
            <span class="left">y 210.8900412</span>
            <span>z</span>
            <button>Millimeters</button>
            <button class="left"><span class="swatch"></span>Default</button>
            <button class="on">Grid Snap</button>
            <button class="on">Ortho</button>
            <button class="on">Planar</button>
            <button class="on">Osnap</button>
            <button>SmartTrack</button>
            <button class="on">Gumball</button>
            <button class="on">Record History</button>
            <button>Filter</button>
            <span class="left count">Selected object count:</span>
        `
    }
}

class TaskBar extends BaseElement {
    render() {
        return `
            <style>
                :host { display: flex; height: 26px; background: #101010; color: #eee; }
                button { display: flex; align-items: center; justify-content: center; }
                .quick { width: 33px; }
                .task { justify-content: flex-start; padding-left: 2px; gap: 1px; border-bottom: 2px solid #6fadd9; }
                .folder { width: 101px; margin: 0 2px 0 3px; }
                .web { width: 102px; margin-left: 2px; }
                .earth { width: 102px; margin-left: 6px; }
                .active { width: 107px; margin-left: 4px; background: #333; }
                .tray { display: flex; align-items: stretch; margin-left: auto; }
                .tray .small { width: 16px; }
                .language { width: 22px; flex-direction: column; gap: 2px; line-height: 9px; }
                .clock { width: 50px; flex-direction: column; line-height: 12px; }
                .notice { width: 28px; margin-right: 8px; }
            </style>
            <button class="quick" aria-label="Start">${iconSvg('windows')}</button>
            <button class="quick" aria-label="Search">${iconSvg('search')}</button>
            <button class="task folder">${iconSvg('folder')}Rhino</button>
            ${['blade', 'arrows-task', 'paint-task', 'rhino-seven', 'eye'].map(name => `<button class="quick" aria-label="${name}">${iconSvg(name)}</button>`).join('')}
            <button class="task web">${iconSvg('firefox')}Паша Христова - Т...</button>
            <button class="task earth">${iconSvg('earth')}Google Earth Pro</button>
            <button class="task active">${iconSvg('rhino-seven')}Rhino 7 Commercia...</button>
            <div class="tray">
                <button class="language"><span>EN</span><svg width="11" height="7">${r(0, 1, 11, 6, '#bbb', 'none')}${p('M2 3H9M2 5H9', 'none', '#666')}</svg></button>
                ${['chevron', 'tray-cam', 'tray-swirl', 'speaker', 'weather', 'network', 'tray-chip'].map(name => `<button class="small" aria-label="${name}">${iconSvg(name)}</button>`).join('')}
                <button class="clock"><span>11:32</span><span>17.11.2022 г.</span></button>
                <button class="notice" aria-label="Notifications">${iconSvg('notice')}</button>
            </div>
        `
    }
}

customElements.define('title-bar', TitleBar)
customElements.define('menu-bar', MenuBar)
customElements.define('command-area', CommandArea)
customElements.define('tool-strip', ToolStrip)
customElements.define('tool-panel', ToolPanel)
customElements.define('model-viewport', ModelViewport)
customElements.define('status-bar', StatusBar)
customElements.define('task-bar', TaskBar)
</script>
</body>
</html>
